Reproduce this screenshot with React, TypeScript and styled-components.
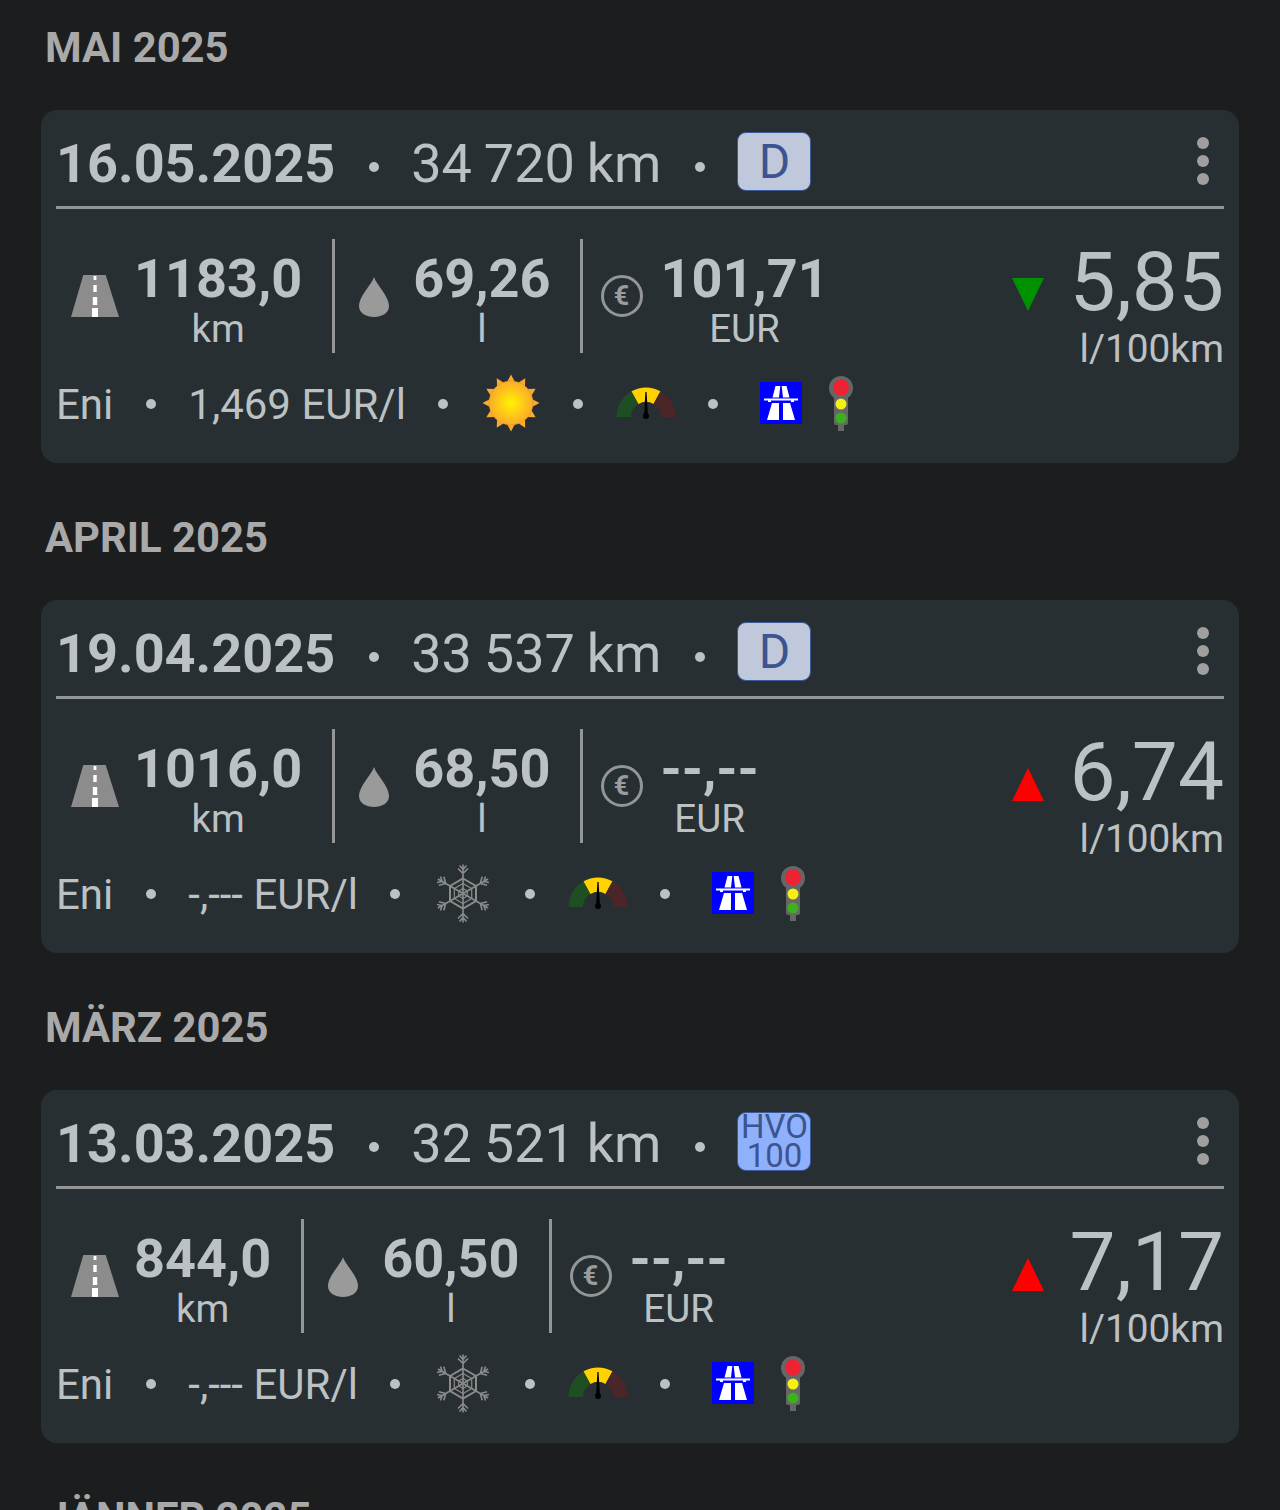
import React from 'react'
import styled, { createGlobalStyle } from 'styled-components'

const GlobalStyle = createGlobalStyle`
    html, body {
        margin: 0;
        padding: 0;
        height: 1510px;
        overflow: hidden;
        background: #1b1d1f;
    }
    #root {
        height: 1510px;
        overflow: hidden;
    }
`

const Page = styled.main`
    font-family: Roboto, "Noto Sans", sans-serif;
    color: #bcc1c3;
    background: #1b1d1f;
    height: 1510px;
    overflow: hidden;
`

const Section = styled.section`
    margin-bottom: 27px;
`

const MonthHeading = styled.h2`
    height: 96px;
    margin: 0 0 14px;
    padding-left: 45px;
    font-size: 41.8px;
    font-weight: 700;
    line-height: 96px;
    color: #a9a9a9;
`

const Card = styled.article`
    margin: 0 41px;
    padding: 0 15px 29px;
    height: 353px;
    box-sizing: border-box;
    background: #272f33;
    border-radius: 16px;
`

const CardHeader = styled.header`
    display: flex;
    align-items: center;
    height: 99px;
    padding-top: 6px;
    box-sizing: border-box;
    border-bottom: 3px solid #949696;
`

const DateText = styled.span`
    padding-top: 4px;
    font-size: 54px;
    font-weight: 700;
`

const Odometer = styled.span`
    padding-top: 4px;
    font-size: 54px;
    font-weight: 400;
    word-spacing: -1.5px;
`

const Dot = styled.i`
    flex: none;
    width: 10px;
    height: 10px;
    margin: 0 32.5px;
    border-radius: 50%;
    background: #bcc1c3;
`

const HeaderDot = styled(Dot)`
    margin: 12px 32.5px 0 33.5px;
`

const FuelBadge = styled.span<{ $premium?: boolean }>`
    display: flex;
    flex: none;
    align-items: center;
    justify-content: center;
    width: 74px;
    height: 59px;
    padding-top: ${props => (props.$premium ? 0 : 1)}px;
    box-sizing: border-box;
    border: 1.5px solid #3d5a98;
    border-radius: 9px;
    background: ${props => (props.$premium ? '#8fb0fb' : '#c0c9dc')};
    color: #3c5490;
    font-size: ${props => (props.$premium ? 33 : 48)}px;
    line-height: 29px;
    text-align: center;
    white-space: pre-line;
`

const MenuButton = styled.button`
    display: flex;
    flex-direction: column;
    gap: 6px;
    margin-left: auto;
    margin-right: 15px;
    padding: 0;
    border: 0;
    background: none;
`

const MenuDot = styled.i`
    width: 12px;
    height: 12px;
    border-radius: 50%;
    background: #a09e9e;
`

const StatsRow = styled.div`
    display: flex;
    height: 114px;
    margin-top: 30px;
`

const Stat = styled.div<{ $first?: boolean; $euro?: boolean }>`
    display: flex;
    align-items: center;
    gap: ${props => (props.$euro ? 17 : props.$first ? 15 : 23)}px;
    padding: 0 30px 0 ${props => (props.$first ? 15 : props.$euro ? 18 : 23)}px;
    border-right: ${props => (props.$euro ? 0 : 3)}px solid #949696;
`

const StatText = styled.div`
    display: flex;
    flex-direction: column;
    align-items: center;
    padding-top: 9px;
`

const StatValue = styled.span`
    height: 56px;
    font-size: 54px;
    font-weight: 700;
    line-height: 56px;
`

const StatUnit = styled.span`
    height: 44px;
    font-size: 38.5px;
    line-height: 44px;
`

const Consumption = styled.div`
    display: flex;
    align-items: flex-start;
    margin-left: auto;
    gap: 26px;
`

const Trend = styled.svg`
    flex: none;
    width: 32px;
    height: 33px;
    margin-top: 39px;
`

const ConsumptionText = styled.div`
    display: flex;
    flex-direction: column;
    align-items: flex-end;
`

const ConsumptionValue = styled.span`
    height: 84px;
    margin-top: 2px;
    font-size: 82px;
    font-weight: 400;
    line-height: 82px;
`

const ConsumptionUnit = styled.span`
    height: 48px;
    font-size: 38.8px;
    line-height: 48px;
`

const FooterRow = styled.div`
    display: flex;
    align-items: center;
    height: 60px;
    margin-top: 21px;
    font-size: 42px;
`

const EuroBadge = styled.span`
    display: flex;
    flex: none;
    align-items: center;
    justify-content: center;
    width: 42px;
    height: 42px;
    padding-right: 2px;
    box-sizing: border-box;
    border: 3px solid #949696;
    border-radius: 50%;
    color: #9c9c9c;
    font-size: 27px;
    font-weight: 700;
`

const Drawing = styled.svg`
    display: block;
    flex: none;
    overflow: visible;
`

const DropDrawing = styled(Drawing)`
    margin-top: 2px;
`

const GaugeDrawing = styled(Drawing)`
    margin-bottom: 2px;
`

const MotorwayDrawing = styled(Drawing)`
    margin: 0 27px 2px 9px;
`

const TrafficDrawing = styled(Drawing)`
    margin-bottom: 2px;
`

const RoadIcon = () => (
    <Drawing width="48" height="44" viewBox="0 0 48 44">
        <path d="M12.3 1H34.7L48 43H0Z" fill="#8c8c8c" />
        <path d="M22.6 2h2.8v4h-2.8zM22.3 11h3.4v7h-3.4zM21.8 23h4.4v8h-4.4zM21 34h6v9h-6z" fill="#fff" />
    </Drawing>
)

const DropIcon = () => (
    <DropDrawing width="32" height="41" viewBox="0 0 32 41">
        <path d="M16 0C13.5 8 1 19 1 29C1 36 8 40 16 40C24 40 31 36 31 29C31 19 18.5 8 16 0Z" fill="#9a9a9a" />
    </DropDrawing>
)

const TrendIcon = ({ up }: { up: boolean }) => (
    <Trend viewBox="0 0 32 33">
        {up ? <path d="M16 0L32 33H0Z" fill="#ff0000" /> : <path d="M0 0H32L16 33Z" fill="#009000" />}
    </Trend>
)

const spikes = Array.from({ length: 12 }, (_, i) => i * 30)

const SunIcon = () => (
    <Drawing width="60" height="60" viewBox="-30 -29 60 60">
        <defs>
            <radialGradient id="sun">
                <stop offset="0" stopColor="#fff200" />
                <stop offset="1" stopColor="#fbab2a" />
            </radialGradient>
        </defs>
        {spikes.map(a => (
            <path key={a} d="M-4.5 -20L0 -28.5L4.5 -20Z" fill="#f9ab2c" transform={`rotate(${a})`} />
        ))}
        <circle r="22" fill="url(#sun)" stroke="#d8952c" strokeWidth="0.5" />
    </Drawing>
)

const flakeArms = [0, 60, 120, 180, 240, 300]

const SnowIcon = () => (
    <Drawing width="60" height="60" viewBox="-30 -29.5 60 60">
        <g stroke="#8b8b8b" fill="none" strokeWidth="1.6">
            <path d="M0 -15L13 -7.5V7.5L0 15L-13 7.5V-7.5Z" strokeWidth="2" />
            <path d="M0 -10L8.7 -5V5L0 10L-8.7 5V-5Z" strokeWidth="1.2" />
            <path d="M0 -5L4.3 -2.5V2.5L0 5L-4.3 2.5V-2.5Z" strokeWidth="1.2" />
            {flakeArms.map(a => (
                <path key={a} d="M0 0V-29M0 -20L-5 -25M0 -20L5 -25M0 -24L-3.5 -28M0 -24L3.5 -28" transform={`rotate(${a})`} />
            ))}
        </g>
    </Drawing>
)

const GaugeIcon = () => (
    <GaugeDrawing width="60" height="32" viewBox="0 0 60 32">
        <path d="M0.5 30A29.5 29.5 0 0 1 15.5 4.2L22.5 17A15 15 0 0 0 15 30Z" fill="#1f4d24" />
        <path d="M15.5 4.2A29.5 29.5 0 0 1 44.5 4.2L37.5 17A15 15 0 0 0 22.5 17Z" fill="#ffd200" />
        <path d="M44.5 4.2A29.5 29.5 0 0 1 59.5 30H45A15 15 0 0 0 37.5 17Z" fill="#4a2628" />
        <path d="M29.4 5H30.6L32 30H28Z" fill="#000" />
        <circle cx="30" cy="29" r="3" fill="#000" />
    </GaugeDrawing>
)

const MotorwayIcon = () => (
    <MotorwayDrawing width="42" height="42" viewBox="0 0 42 42">
        <rect width="42" height="42" fill="#0000ff" />
        <path d="M15.5 4H20.3L19 15.5H12.5ZM21.7 4H26.5L29.5 15.5H23Z" fill="#fff" />
        <path d="M4 16.5H38V18.5H34V20H31V18.5H11V20H8V18.5H4Z" fill="#fff" />
        <path d="M12 21H19V38H7ZM23 21H30L35 38H23Z" fill="#fff" />
    </MotorwayDrawing>
)

const TrafficLightIcon = () => (
    <TrafficDrawing width="24" height="55" viewBox="0 0 24 55">
        <circle cx="12" cy="12" r="12" fill="#666" />
        <rect x="5" y="12" width="14" height="37" rx="2" fill="#666" />
        <rect x="9" y="48" width="6" height="7" fill="#666" />
        <circle cx="12" cy="11.5" r="8" fill="#ee2233" />
        <circle cx="12" cy="28" r="5.5" fill="#f5f014" />
        <circle cx="12" cy="42" r="5.5" fill="#3cb01e" />
    </TrafficDrawing>
)

type Entry = {
    month: string
    date: string
    odometer: string
    fuel: string
    premium?: boolean
    distance: string
    litres: string
    cost: string
    consumption: string
    improved: boolean
    price: string
    sunny: boolean
}

const entries: Entry[] = [
    { month: 'MAI 2025', date: '16.05.2025', odometer: '34 720 km', fuel: 'D', distance: '1183,0', litres: '69,26', cost: '101,71', consumption: '5,85', improved: true, price: '1,469 EUR/l', sunny: true },
    { month: 'APRIL 2025', date: '19.04.2025', odometer: '33 537 km', fuel: 'D', distance: '1016,0', litres: '68,50', cost: '--,--', consumption: '6,74', improved: false, price: '-,--- EUR/l', sunny: false },
    { month: 'MÄRZ 2025', date: '13.03.2025', odometer: '32 521 km', fuel: 'HVO\n100', premium: true, distance: '844,0', litres: '60,50', cost: '--,--', consumption: '7,17', improved: false, price: '-,--- EUR/l', sunny: false },
]

const RefuelCard = ({ entry }: { entry: Entry }) => (
    <Card>
        <CardHeader>
            <DateText>{entry.date}</DateText>
            <HeaderDot />
            <Odometer>{entry.odometer}</Odometer>
            <HeaderDot />
            <FuelBadge $premium={entry.premium}>{entry.fuel}</FuelBadge>
            <MenuButton>
                <MenuDot />
                <MenuDot />
                <MenuDot />
            </MenuButton>
        </CardHeader>
        <StatsRow>
            <Stat $first>
                <RoadIcon />
                <StatText>
                    <StatValue>{entry.distance}</StatValue>
                    <StatUnit>km</StatUnit>
                </StatText>
            </Stat>
            <Stat>
                <DropIcon />
                <StatText>
                    <StatValue>{entry.litres}</StatValue>
                    <StatUnit>l</StatUnit>
                </StatText>
            </Stat>
            <Stat $euro>
                <EuroBadge>€</EuroBadge>
                <StatText>
                    <StatValue>{entry.cost}</StatValue>
                    <StatUnit>EUR</StatUnit>
                </StatText>
            </Stat>
            <Consumption>
                <TrendIcon up={!entry.improved} />
                <ConsumptionText>
                    <ConsumptionValue>{entry.consumption}</ConsumptionValue>
                    <ConsumptionUnit>l/100km</ConsumptionUnit>
                </ConsumptionText>
            </Consumption>
        </StatsRow>
        <FooterRow>
            <span>Eni</span>
            <Dot />
            <span>{entry.price}</span>
            <Dot />
            {entry.sunny ? <SunIcon /> : <SnowIcon />}
            <Dot />
            <GaugeIcon />
            <Dot />
            <MotorwayIcon />
            <TrafficLightIcon />
        </FooterRow>
    </Card>
)

export default function App() {
    return (
        <Page>
            <GlobalStyle />
            {entries.map(entry => (
                <Section key={entry.month}>
                    <MonthHeading>{entry.month}</MonthHeading>
                    <RefuelCard entry={entry} />
                </Section>
            ))}
            <Section>
                <MonthHeading>JÄNNER 2025</MonthHeading>
            </Section>
        </Page>
    )
}
